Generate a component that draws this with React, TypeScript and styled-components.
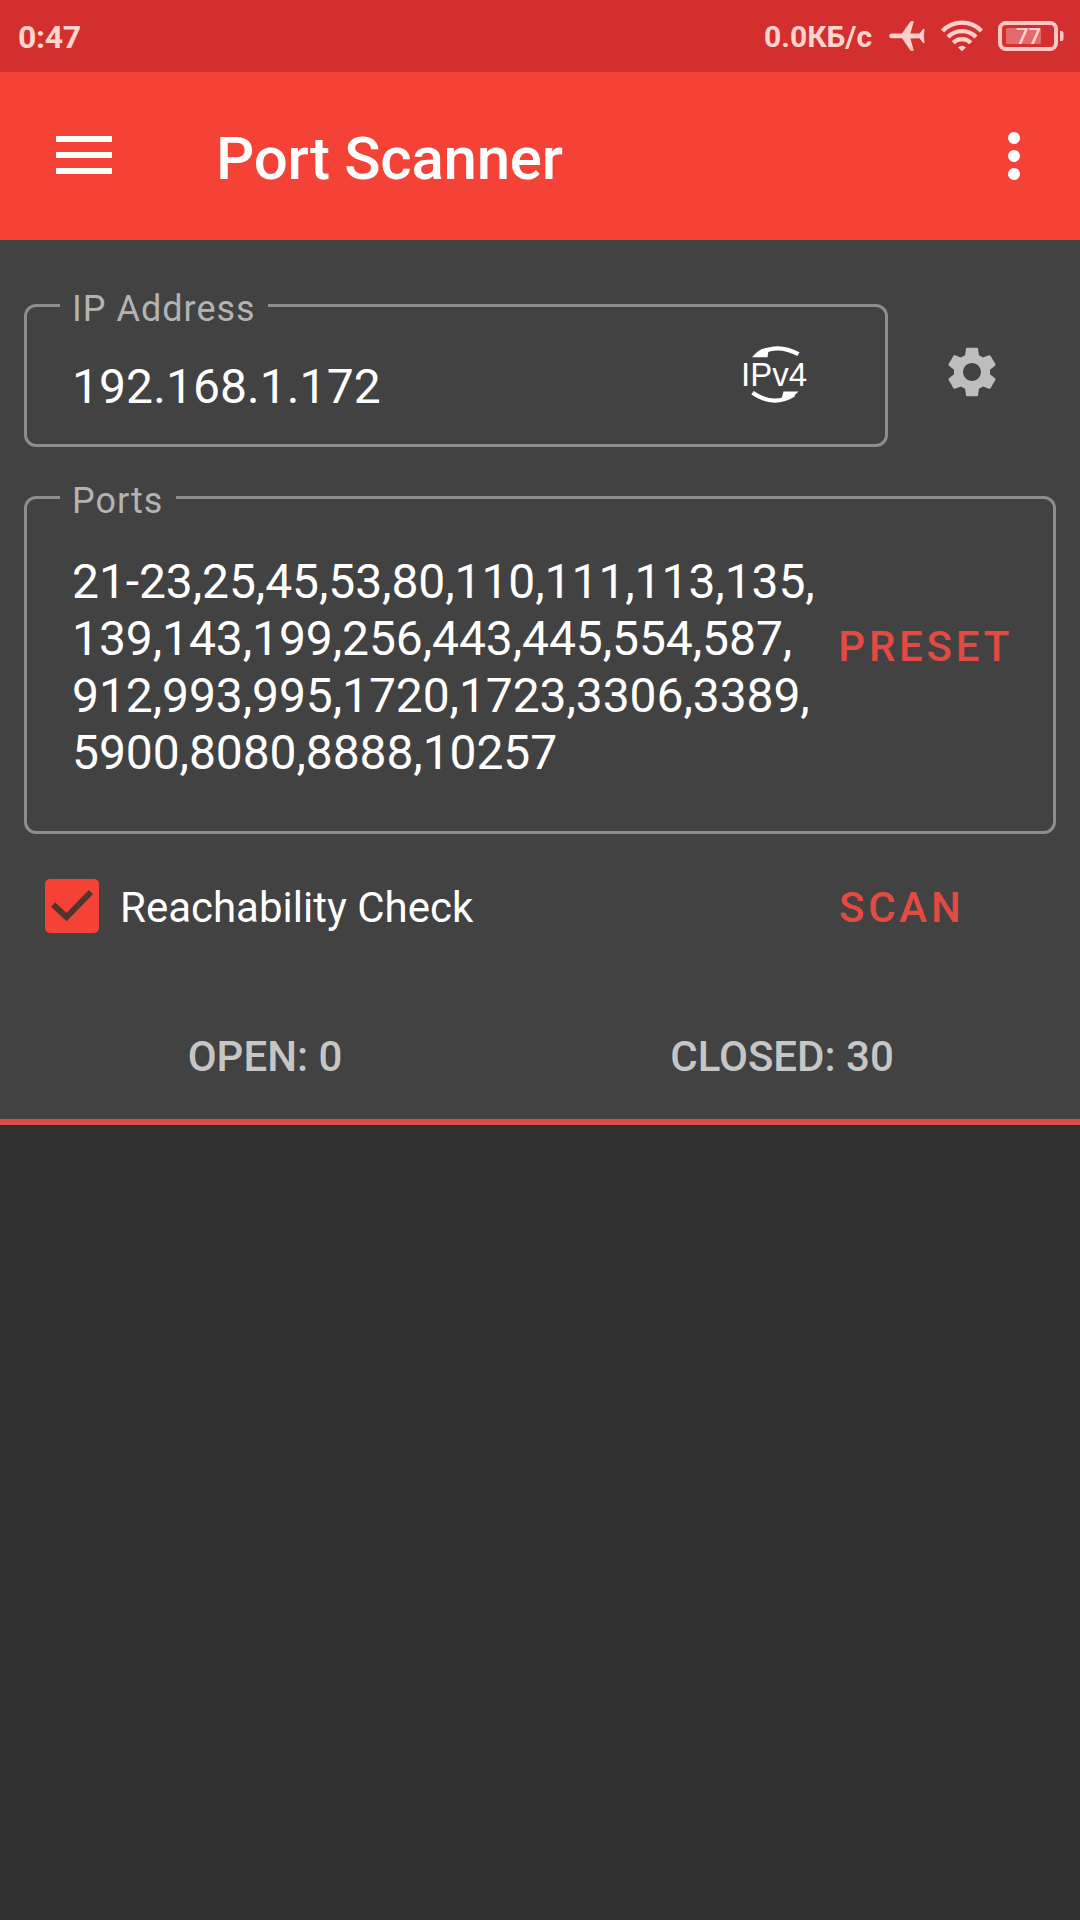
import React from 'react';
import styled, { createGlobalStyle } from 'styled-components';

const GlobalStyle = createGlobalStyle`
  * { box-sizing: border-box; }
  body { margin: 0; background: #303030; }
`;

const Screen = styled.div`
  display: flex;
  flex-direction: column;
  width: 1080px;
  height: 1920px;
  overflow: hidden;
  background: #303030;
  color: #fff;
  font-family: Roboto, 'Liberation Sans', sans-serif;
`;

const StatusBar = styled.header`
  display: flex;
  align-items: center;
  justify-content: space-between;
  height: 72px;
  padding: 0 16px 0 18px;
  background: #d32f2f;
  color: #ffd5ce;
  font-weight: 700;
  font-size: 30px;
`;

const Clock = styled.span`
  font-size: 32px;
  line-height: 38px;
  padding-top: 2px;
  letter-spacing: -0.3px;
`;

const StatusGroup = styled.div`
  display: flex;
  align-items: center;
`;

const Speed = styled.span`
  width: 108px;
  margin-right: 17px;
  white-space: nowrap;
`;

const StatusSvg = styled.svg<{ $gap: number }>`
  display: block;
  flex: none;
  margin-right: ${(p) => p.$gap}px;
`;

const AppBar = styled.div`
  display: flex;
  align-items: center;
  height: 168px;
  padding: 0 60px 0 56px;
  background: #f44336;
`;

const MenuButton = styled.button`
  display: flex;
  flex-direction: column;
  gap: 10px;
  width: 56px;
  padding: 0;
  margin: 0 104px 2px 0;
  border: 0;
  background: none;
`;

const MenuBar = styled.span`
  height: 6px;
  background: #fff;
`;

const Title = styled.h1`
  flex: 1;
  margin: 0;
  padding-top: 5px;
  font-size: 60px;
  line-height: 70px;
  font-weight: 500;
  letter-spacing: -0.25px;
`;

const MoreButton = styled.button`
  display: flex;
  flex-direction: column;
  gap: 6px;
  padding: 0;
  border: 0;
  background: none;
`;

const Dot = styled.span`
  width: 12px;
  height: 12px;
  border-radius: 50%;
  background: #fff;
`;

const Panel = styled.main`
  height: 885px;
  padding: 42px 24px 0;
  border-bottom: 6px solid #db4c45;
  background: #424242;
`;

const AddressRow = styled.div`
  display: flex;
`;

const Field = styled.fieldset<{ $width: number; $height: number }>`
  display: block;
  width: ${(p) => p.$width}px;
  height: ${(p) => p.$height}px;
  min-width: 0;
  margin: 0;
  padding: 0 33px;
  border: 3px solid #8e8e8e;
  border-radius: 12px;
`;

const Legend = styled.legend<{ $width: number }>`
  width: ${(p) => p.$width}px;
  height: 47px;
  padding: 6px 0 0 12px;
  color: #b3b3b3;
  font-size: 36px;
  line-height: 42px;
  letter-spacing: 1px;
  white-space: nowrap;
`;

const FieldBody = styled.div<{ $top: number }>`
  display: flex;
  align-items: flex-start;
  padding: ${(p) => p.$top}px 0 0 12px;
`;

const Value = styled.div<{ $spacing: number }>`
  flex: 1;
  font-size: 48px;
  line-height: 57px;
  letter-spacing: ${(p) => p.$spacing}px;
  white-space: pre;
`;

const Ipv4Button = styled.svg`
  display: block;
  flex: none;
  margin: -14px 37px 0 0;
`;

const SettingsIcon = styled.svg`
  display: block;
  margin: 61px 0 0 55px;
`;

const PortsRow = styled.div`
  padding-top: 27px;
`;

const TextButton = styled.button<{ $top?: number; $right?: number }>`
  flex: none;
  padding: 0;
  margin-top: ${(p) => p.$top ?? 0}px;
  margin-right: ${(p) => p.$right ?? 0}px;
  border: 0;
  background: none;
  color: #e24a42;
  font: 500 42px/50px Roboto, 'Liberation Sans', sans-serif;
  letter-spacing: 3.75px;
`;

const ActionRow = styled.div`
  display: flex;
  align-items: center;
  height: 54px;
  margin-top: 45px;
  padding-left: 21px;
`;

const CheckBox = styled.span`
  display: flex;
  flex: none;
  width: 54px;
  height: 54px;
  border-radius: 5px;
  background: #f44336;
`;

const CheckLabel = styled.span`
  flex: none;
  width: 740px;
  padding: 3px 0 0 21px;
  font-size: 42px;
  line-height: 50px;
`;

const Counters = styled.div`
  display: flex;
  margin: 99px 0 0 -24px;
`;

const Counter = styled.div<{ $width: number }>`
  width: ${(p) => p.$width}px;
  text-align: center;
  color: #c6c6c6;
  font-size: 42px;
  line-height: 50px;
  font-weight: 500;
`;

const PORTS = [
  '21-23,25,45,53,80,110,111,113,135,',
  '139,143,199,256,443,445,554,587,',
  '912,993,995,1720,1723,3306,3389,',
  '5900,8080,8888,10257',
].join('\n');

const AirplaneIcon = () => (
  <StatusSvg $gap={16} width="36" height="32" viewBox="0 0 36 32" fill="#ffd0cc">
    <path d="M2.5 13.6H13L21.6 1.2H24.8L21.4 13.4L30.5 13.6L34 9H35.6L34.8 16L35.6 23H34L30.5 18.2L21.4 18.4L24.8 30.8H21.6L13 18.2H2.5A2.3 2.3 0 0 1 2.5 13.6Z" />
  </StatusSvg>
);

const WifiIcon = () => (
  <StatusSvg $gap={15} width="42" height="32" viewBox="0 0 42 32" fill="none" stroke="#ffd0cc" strokeWidth="4.3">
    <path d="M1.5 11A27 27 0 0 1 40.5 11" />
    <path d="M7 17A19.5 19.5 0 0 1 35 17" />
    <path d="M12.2 22.8A12.4 12.4 0 0 1 29.8 22.8" />
    <path d="M17 27.4Q21 24 25 27.4L21 31.2Z" fill="#ffd0cc" stroke="none" />
  </StatusSvg>
);

const BatteryIcon = () => (
  <StatusSvg $gap={0} width="66" height="30" viewBox="0 0 66 30">
    <rect x="2" y="2" width="56" height="26" rx="6" fill="none" stroke="#ffc7c4" strokeWidth="4" />
    <rect x="8" y="7" width="35" height="16" rx="1.5" fill="#e5686a" />
    <path d="M62 10h1.5q2 0 2 2v6q0 2-2 2H62Z" fill="#ffc7c4" />
    <text x="30.5" y="22.8" textAnchor="middle" fontFamily="Roboto, sans-serif" fontSize="22" fontWeight="500" fill="#ffd5ce">77</text>
  </StatusSvg>
);

const Ipv4Icon = () => (
  <Ipv4Button width="76" height="60" viewBox="-4 0 76 60" fill="none" stroke="#fff">
    <path d="M14 10.5Q32.5-3.5 55.5 9" transform="translate(0 1.2)" strokeWidth="4.2" />
    <path d="M9 13.2Q17 3.8 26 3.4L24.5 13.2Z" fill="#fff" stroke="none" />
    <path d="M9.5 48.8Q31 63.4 51 50.4" strokeWidth="4.2" />
    <path d="M55.5 47.6Q47 57 38 57L40.5 47.6Z" fill="#fff" stroke="none" />
    <text x="-2" y="42" textLength="66" lengthAdjust="spacingAndGlyphs" fontFamily="'Liberation Sans', sans-serif" fontSize="34" fill="#fff" stroke="none">IPv4</text>
  </Ipv4Button>
);

const GearIcon = () => (
  <SettingsIcon width="58" height="58" viewBox="0 0 24 24" fill="#bdbdbd">
    <path d="M19.43 12.98c.04-.32.07-.64.07-.98s-.03-.66-.07-.98l2.11-1.65c.19-.15.24-.42.12-.64l-2-3.46c-.12-.22-.39-.3-.61-.22l-2.49 1c-.52-.4-1.08-.73-1.69-.98l-.38-2.65C14.46 2.18 14.25 2 14 2h-4c-.25 0-.46.18-.49.42l-.38 2.65c-.61.25-1.17.59-1.69.98l-2.49-1c-.23-.09-.49 0-.61.22l-2 3.46c-.13.22-.07.49.12.64l2.11 1.65c-.04.32-.07.65-.07.98s.03.66.07.98l-2.11 1.65c-.19.15-.24.42-.12.64l2 3.46c.12.22.39.3.61.22l2.49-1c.52.4 1.08.73 1.69.98l.38 2.65c.03.24.24.42.49.42h4c.25 0 .46-.18.49-.42l.38-2.65c.61-.25 1.17-.59 1.69-.98l2.49 1c.23.09.49 0 .61-.22l2-3.46c.12-.22.07-.49-.12-.64l-2.11-1.65zM12 15.7c-2.04 0-3.7-1.66-3.7-3.7s1.66-3.7 3.7-3.7 3.7 1.66 3.7 3.7-1.66 3.7-3.7 3.7z" />
  </SettingsIcon>
);

export default function App() {
  return (
    <>
      <GlobalStyle />
      <Screen>
        <StatusBar>
          <Clock>0:47</Clock>
          <StatusGroup>
            <Speed>0.0КБ/с</Speed>
            <AirplaneIcon />
            <WifiIcon />
            <BatteryIcon />
          </StatusGroup>
        </StatusBar>
        <AppBar>
          <MenuButton aria-label="Menu">
            <MenuBar />
            <MenuBar />
            <MenuBar />
          </MenuButton>
          <Title>Port Scanner</Title>
          <MoreButton aria-label="More">
            <Dot />
            <Dot />
            <Dot />
          </MoreButton>
        </AppBar>
        <Panel>
          <AddressRow>
            <Field $width={864} $height={165}>
              <Legend $width={208}>IP Address</Legend>
              <FieldBody $top={29}>
                <Value $spacing={0.08}>192.168.1.172</Value>
                <Ipv4Icon />
              </FieldBody>
            </Field>
            <GearIcon />
          </AddressRow>
          <PortsRow>
            <Field $width={1032} $height={360}>
              <Legend $width={116}>Ports</Legend>
              <FieldBody $top={32}>
                <Value $spacing={-0.09}>{PORTS}</Value>
                <TextButton $top={69} $right={7}>PRESET</TextButton>
              </FieldBody>
            </Field>
          </PortsRow>
          <ActionRow>
            <CheckBox>
              <svg width="54" height="54" viewBox="0 0 54 54" fill="none" stroke="#523430" strokeWidth="6">
                <path d="M8 25.5L21.5 38L46 13" />
              </svg>
            </CheckBox>
            <CheckLabel>Reachability Check</CheckLabel>
            <TextButton $top={3}>SCAN</TextButton>
          </ActionRow>
          <Counters>
            <Counter $width={530}>OPEN: 0</Counter>
            <Counter $width={504}>CLOSED: 30</Counter>
          </Counters>
        </Panel>
      </Screen>
    </>
  );
}
